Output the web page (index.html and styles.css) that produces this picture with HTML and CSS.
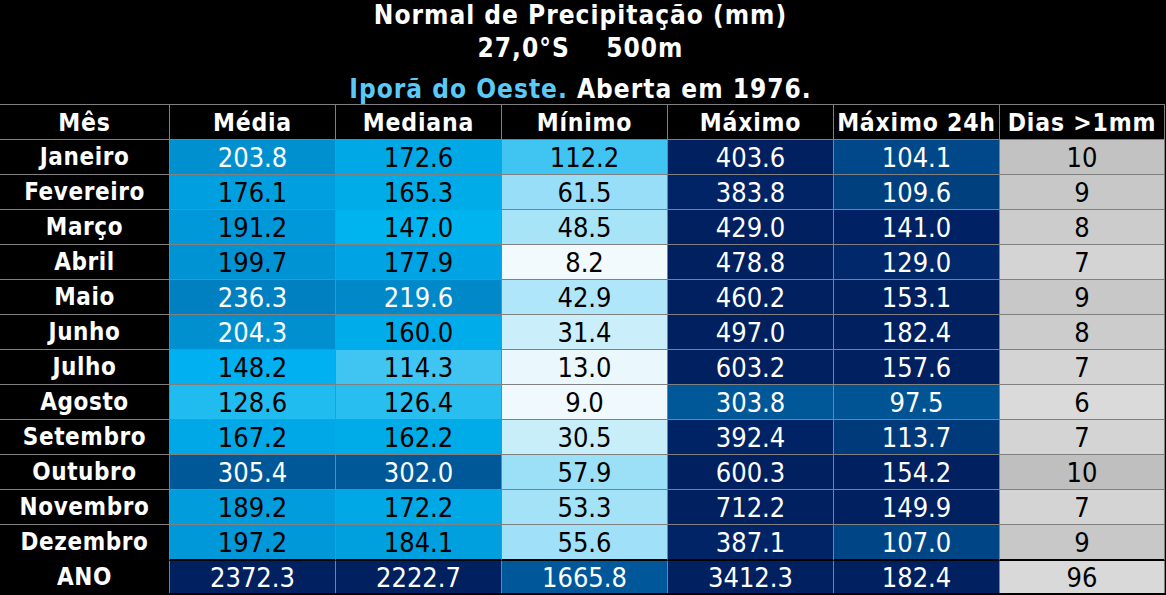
FILE: index.html
```html
<!DOCTYPE html>
<html lang="pt">
<head>
<meta charset="utf-8">
<title>Normal de Precipitação</title>
<link rel="stylesheet" href="styles.css">
</head>
<body>
<div class="page">
  <header class="titles">
    <div class="t1">Normal de Precipitação (mm)</div>
    <div class="t2">27,0°S    500m</div>
    <div class="t3"><span class="place">Iporã do Oeste.</span> Aberta em 1976.</div>
  </header>
  <div class="table">
    <div class="row head">
      <div class="cell">Mês</div><div class="cell">Média</div><div class="cell">Mediana</div><div class="cell">Mínimo</div><div class="cell">Máximo</div><div class="cell">Máximo 24h</div><div class="cell">Dias &gt;1mm</div>
    </div>
    <div class="row">
      <div class="cell month">Janeiro</div>
      <div class="cell num w" style="background:#0090d0">203.8</div>
      <div class="cell num" style="background:#00a8e6">172.6</div>
      <div class="cell num" style="background:#40c4f2">112.2</div>
      <div class="cell num w" style="background:#002060">403.6</div>
      <div class="cell num w" style="background:#00488a">104.1</div>
      <div class="cell num" style="background:#c2c2c2">10</div>
    </div>
    <div class="row">
      <div class="cell month">Fevereiro</div>
      <div class="cell num" style="background:#00a0e0">176.1</div>
      <div class="cell num" style="background:#00ace8">165.3</div>
      <div class="cell num" style="background:#98def8">61.5</div>
      <div class="cell num w" style="background:#002466">383.8</div>
      <div class="cell num w" style="background:#00407e">109.6</div>
      <div class="cell num" style="background:#c8c8c8">9</div>
    </div>
    <div class="row">
      <div class="cell month">Março</div>
      <div class="cell num" style="background:#0098d8">191.2</div>
      <div class="cell num" style="background:#00b4f0">147.0</div>
      <div class="cell num" style="background:#a8e4f8">48.5</div>
      <div class="cell num w" style="background:#002060">429.0</div>
      <div class="cell num w" style="background:#002264">141.0</div>
      <div class="cell num" style="background:#cccccc">8</div>
    </div>
    <div class="row">
      <div class="cell month">Abril</div>
      <div class="cell num" style="background:#0093d3">199.7</div>
      <div class="cell num" style="background:#00a4e4">177.9</div>
      <div class="cell num" style="background:#f2fafe">8.2</div>
      <div class="cell num w" style="background:#002060">478.8</div>
      <div class="cell num w" style="background:#00286a">129.0</div>
      <div class="cell num" style="background:#d4d4d4">7</div>
    </div>
    <div class="row">
      <div class="cell month">Maio</div>
      <div class="cell num w" style="background:#0080c0">236.3</div>
      <div class="cell num w" style="background:#0088c8">219.6</div>
      <div class="cell num" style="background:#b0e6fa">42.9</div>
      <div class="cell num w" style="background:#002060">460.2</div>
      <div class="cell num w" style="background:#002060">153.1</div>
      <div class="cell num" style="background:#c8c8c8">9</div>
    </div>
    <div class="row">
      <div class="cell month">Junho</div>
      <div class="cell num w" style="background:#0090d0">204.3</div>
      <div class="cell num" style="background:#00acea">160.0</div>
      <div class="cell num" style="background:#caeffb">31.4</div>
      <div class="cell num w" style="background:#002060">497.0</div>
      <div class="cell num w" style="background:#002060">182.4</div>
      <div class="cell num" style="background:#cccccc">8</div>
    </div>
    <div class="row">
      <div class="cell month">Julho</div>
      <div class="cell num" style="background:#00b0f0">148.2</div>
      <div class="cell num" style="background:#40c4f2">114.3</div>
      <div class="cell num" style="background:#eaf8fe">13.0</div>
      <div class="cell num w" style="background:#002060">603.2</div>
      <div class="cell num w" style="background:#002060">157.6</div>
      <div class="cell num" style="background:#d4d4d4">7</div>
    </div>
    <div class="row">
      <div class="cell month">Agosto</div>
      <div class="cell num" style="background:#20bcf0">128.6</div>
      <div class="cell num" style="background:#28bef0">126.4</div>
      <div class="cell num" style="background:#f0fafe">9.0</div>
      <div class="cell num w" style="background:#005898">303.8</div>
      <div class="cell num w" style="background:#005494">97.5</div>
      <div class="cell num" style="background:#dadada">6</div>
    </div>
    <div class="row">
      <div class="cell month">Setembro</div>
      <div class="cell num" style="background:#00a8e8">167.2</div>
      <div class="cell num" style="background:#00ace8">162.2</div>
      <div class="cell num" style="background:#c8eefa">30.5</div>
      <div class="cell num w" style="background:#002365">392.4</div>
      <div class="cell num w" style="background:#003a7a">113.7</div>
      <div class="cell num" style="background:#d4d4d4">7</div>
    </div>
    <div class="row">
      <div class="cell month">Outubro</div>
      <div class="cell num w" style="background:#005898">305.4</div>
      <div class="cell num w" style="background:#005898">302.0</div>
      <div class="cell num" style="background:#9ce0f8">57.9</div>
      <div class="cell num w" style="background:#002060">600.3</div>
      <div class="cell num w" style="background:#002060">154.2</div>
      <div class="cell num" style="background:#bfbfbf">10</div>
    </div>
    <div class="row">
      <div class="cell month">Novembro</div>
      <div class="cell num" style="background:#009cdc">189.2</div>
      <div class="cell num" style="background:#00a8e6">172.2</div>
      <div class="cell num" style="background:#a4e2f8">53.3</div>
      <div class="cell num w" style="background:#002060">712.2</div>
      <div class="cell num w" style="background:#002060">149.9</div>
      <div class="cell num" style="background:#d4d4d4">7</div>
    </div>
    <div class="row last">
      <div class="cell month">Dezembro</div>
      <div class="cell num" style="background:#0098d8">197.2</div>
      <div class="cell num" style="background:#00a0de">184.1</div>
      <div class="cell num" style="background:#a0e0f8">55.6</div>
      <div class="cell num w" style="background:#002466">387.1</div>
      <div class="cell num w" style="background:#004586">107.0</div>
      <div class="cell num" style="background:#c8c8c8">9</div>
    </div>
    <div class="row total">
      <div class="cell month">ANO</div>
      <div class="cell num w" style="background:#002060">2372.3</div>
      <div class="cell num w" style="background:#002060">2222.7</div>
      <div class="cell num w" style="background:#00589a">1665.8</div>
      <div class="cell num w" style="background:#002060">3412.3</div>
      <div class="cell num w" style="background:#002060">182.4</div>
      <div class="cell num" style="background:#d9d9d9">96</div>
    </div>
  </div>
</div>
</body>
</html>
```

FILE: styles.css
```css
html, body {
  margin: 0;
  padding: 0;
  background: #000;
}

body {
  width: 1166px;
  height: 595px;
  overflow: hidden;
  font-family: "DejaVu Sans Condensed", "DejaVu Sans", Verdana, sans-serif;
  font-stretch: condensed;
  color: #fff;
}

.titles {
  height: 104px;
  display: flex;
  flex-direction: column;
  align-items: center;
  font-weight: bold;
  font-size: 26px;
  letter-spacing: 1px;
  padding-right: 5px;
  box-sizing: border-box;
}

.t1 {
  line-height: 31px;
}

.t2 {
  line-height: 34px;
  white-space: pre;
}

.t3 {
  line-height: 30px;
  margin-top: 9px;
}

.place {
  color: #5bc9f5;
}

.table {
  width: 1165px;
}

.row {
  display: grid;
  grid-template-columns: 170px 166px 166px 166px 166px 166px 165px;
  height: 35px;
}

.cell {
  box-sizing: border-box;
  border-right: 1px solid #808080;
  border-bottom: 1px solid #808080;
  display: flex;
  align-items: center;
  justify-content: center;
  white-space: nowrap;
  color: #000;
}

.head {
  height: 36px;
}

.head .cell {
  border-top: 1px solid #808080;
  font-weight: bold;
  font-size: 24.5px;
  letter-spacing: 0.8px;
  color: #fff;
  background: #000;
}

.month {
  font-weight: bold;
  font-size: 24px;
  letter-spacing: 0.6px;
  color: #fff;
  background: #000;
}

.num {
  font-size: 27px;
}

.num.w {
  color: #fff;
}

.last {
  height: 36px;
}

.last .cell {
  border-bottom: 2px solid #000;
}

.total {
  height: 32px;
}

.total .cell {
  border-bottom: none;
}
```
